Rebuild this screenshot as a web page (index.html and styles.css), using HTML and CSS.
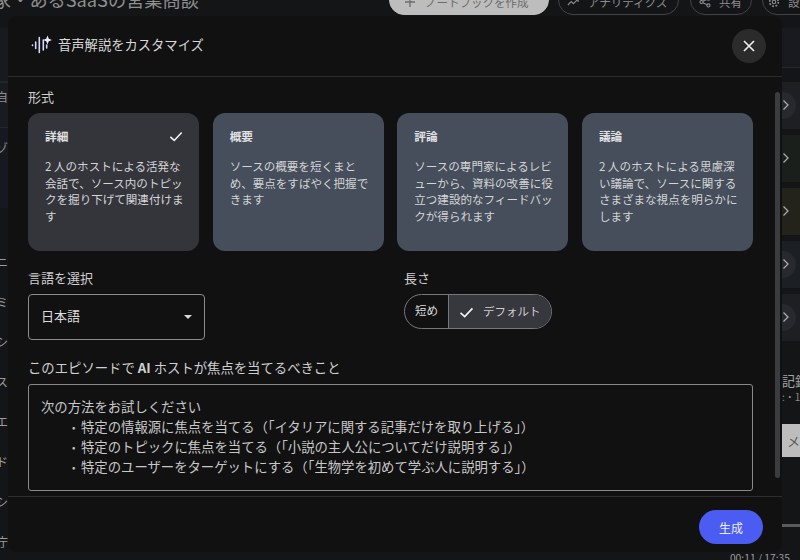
FILE: index.html
```html
<!DOCTYPE html>
<html lang="ja">
<head>
<meta charset="utf-8">
<title>音声解説をカスタマイズ</title>
<link rel="stylesheet" href="styles.css">
</head>
<body>
<div class="page">
  <header class="topbar">
    <div class="nb-title">家・あるSaaSの営業商談</div>
    <div class="top-actions">
      <span class="pill pill-light"><svg class="pill-icon" viewBox="0 0 12 12"><path d="M6 1v10M1 6h10"/></svg>ノートブックを作成</span>
      <span class="pill pill-ana"><svg class="pill-icon" viewBox="0 0 14 12"><path d="M1 9.500 5 5.500l2.500 2.500L13 2.500M9.500 2.500H13V6"/></svg>アナリティクス</span>
      <span class="pill pill-share"><svg class="pill-icon" viewBox="0 0 14 14"><circle cx="11" cy="3" r="1.800"/><circle cx="3" cy="7" r="1.800"/><circle cx="11" cy="11" r="1.800"/><path d="M4.500 6.200l5-2.400M4.500 7.800l5 2.400"/></svg>共有</span>
      <span class="pill pill-set"><svg class="pill-icon" viewBox="0 0 14 14"><circle cx="7" cy="7" r="2"/><circle class="gear" cx="7" cy="7" r="5"/></svg>設定</span>
    </div>
  </header>
  <div class="middle">
    <div class="left-strip">
      <div class="ls-head"></div>
      <div class="ls ls-band">自</div>
      <div class="ls ls-band2">ゾ.</div>
      <div class="ls ls-plain ls-first">ニ</div>
      <div class="ls ls-plain">ミ</div>
      <div class="ls ls-plain">シ</div>
      <div class="ls ls-plain">ス:</div>
      <div class="ls ls-plain">エ</div>
      <div class="ls ls-plain">ド</div>
      <div class="ls ls-plain">シ</div>
      <div class="ls ls-plain">庁:</div>
    </div>
    <div class="center"></div>
    <div class="right-strip">
      <div class="rs-head"></div>
      <div class="rs-row rs-a"><span class="rs-dot"></span><svg class="rs-chev" viewBox="0 0 8 12"><path d="M1.500 1.500 6 6l-4.500 4.500"/></svg></div>
      <div class="rs-row rs-b"><svg class="rs-chev" viewBox="0 0 8 12"><path d="M1.500 1.500 6 6l-4.500 4.500"/></svg></div>
      <div class="rs-row rs-c"><svg class="rs-chev" viewBox="0 0 8 12"><path d="M1.500 1.500 6 6l-4.500 4.500"/></svg></div>
      <div class="rs-row rs-d"><span class="rs-dot"></span><svg class="rs-chev" viewBox="0 0 8 12"><path d="M1.500 1.500 6 6l-4.500 4.500"/></svg></div>
      <div class="rs-row rs-a"><span class="rs-dot"></span><svg class="rs-chev" viewBox="0 0 8 12"><path d="M1.500 1.500 6 6l-4.500 4.500"/></svg></div>
      <div class="rs-text1">記録</div>
      <div class="rs-text2">:・16</div>
      <div class="rs-note">メ</div>
      <div class="rs-bar"></div>
    </div>
  </div>
  <footer class="footbar">00:11 / 17:35</footer>
</div>

<section class="dialog">
  <div class="dlg-head">
    <svg class="spark" viewBox="0 0 22 20" width="22" height="20">
      <path class="spark-bars" d="M2.500 10v.5M5.700 7v6.500M9.300 2.500v15M13.300 5v10M16.700 10v3"/>
      <path class="spark-star" d="M17.500 .5l1.300 3.200 3.200 1.300-3.200 1.300-1.300 3.200-1.300-3.200-3.200-1.300 3.200-1.300z"/>
    </svg>
    <h1 class="dlg-title">音声解説をカスタマイズ</h1>
    <button class="close" aria-label="閉じる">
      <svg viewBox="0 0 14 14" width="14" height="14"><path d="M2 2l10 10M12 2 2 12"/></svg>
    </button>
  </div>
  <div class="dlg-body">
    <div class="label label-first">形式</div>
    <div class="cards">
      <div class="card card-on">
        <div class="card-top"><span class="card-title">詳細</span>
          <svg class="card-check" viewBox="0 0 16 12" width="14" height="11"><path d="M1.500 6.500 6 10.500 14.500 1.500"/></svg>
        </div>
        <p class="card-text">2 人のホストによる活発な会話で、ソース内のトピックを掘り下げて関連付けます</p>
      </div>
      <div class="card">
        <div class="card-top"><span class="card-title">概要</span></div>
        <p class="card-text">ソースの概要を短くまとめ、要点をすばやく把握できます</p>
      </div>
      <div class="card">
        <div class="card-top"><span class="card-title">評論</span></div>
        <p class="card-text">ソースの専門家によるレビューから、資料の改善に役立つ建設的なフィードバックが得られます</p>
      </div>
      <div class="card">
        <div class="card-top"><span class="card-title">議論</span></div>
        <p class="card-text">2 人のホストによる思慮深い議論で、ソースに関するさまざまな視点を明らかにします</p>
      </div>
    </div>
    <div class="options">
      <div class="opt-lang">
        <div class="label">言語を選択</div>
        <div class="select"><span>日本語</span><span class="caret"></span></div>
      </div>
      <div class="opt-len">
        <div class="label">長さ</div>
        <div class="segment">
          <span class="seg seg-short">短め</span>
          <span class="seg seg-def">
            <svg class="seg-check" viewBox="0 0 16 12" width="15" height="11"><path d="M1.500 6.500 6 10.500 14.500 1.500"/></svg>
            デフォルト
          </span>
        </div>
      </div>
    </div>
    <div class="label label-focus">このエピソードで <b>AI</b> ホストが焦点を当てるべきこと</div>
    <div class="textarea">
      <div>次の方法をお試しください</div>
      <ul class="tips">
        <li>特定の情報源に焦点を当てる（「イタリアに関する記事だけを取り上げる」）</li>
        <li>特定のトピックに焦点を当てる（「小説の主人公についてだけ説明する」）</li>
        <li>特定のユーザーをターゲットにする（「生物学を初めて学ぶ人に説明する」）</li>
      </ul>
    </div>
    <div class="scroll-thumb"></div>
  </div>
  <div class="dlg-foot"><button class="gen">生成</button></div>
</section>
</body>
</html>
```

FILE: styles.css
```css
* { box-sizing: border-box; }
html, body { margin: 0; height: 100%; }
body {
  width: 800px;
  height: 560px;
  overflow: hidden;
  position: relative;
  background: #141517;
  font-family: "Noto Sans CJK JP", "Noto Sans", sans-serif;
  color: #d6d8da;
}
.page { height: 560px; display: flex; flex-direction: column; }
.topbar {
  height: 15px;
  flex: none;
  display: flex;
  align-items: flex-end;
  justify-content: space-between;
  overflow: hidden;
  background: #141517;
}
.nb-title {
  font-size: 18.200px;
  line-height: 28px;
  color: #8f8f8f;
  margin-left: -7px;
  margin-bottom: 2px;
  white-space: nowrap;
}
.top-actions { display: flex; gap: 10px; flex: none; margin-right: -40px; align-items: flex-end; }
.pill {
  height: 30px;
  flex: none;
  display: flex;
  align-items: center;
  border: 1px solid #414347;
  border-radius: 15px;
  padding-top: 4px;
  font-size: 11.500px;
  color: #8c8d8f;
  white-space: nowrap;
}
.pill-icon { flex: none; fill: none; stroke: currentColor; stroke-width: 1.300; width: 12px; height: 12px; }
.pill-light { background: #bdbdbd; border-color: #bdbdbd; color: #6c6c6c; width: 160px; padding-left: 14px; gap: 9px; margin-right: -1px; }
.pill-ana { width: 121px; padding-left: 8px; gap: 9px; margin-right: 1px; }
.pill-share { width: 62px; padding-left: 8px; gap: 8px; }
.pill-set { width: 78px; padding-left: 5px; gap: 8px; }
.gear { stroke-dasharray: 2 1.900; stroke-width: 2; }

.middle { flex: 1; display: flex; min-height: 0; }
.left-strip { width: 8px; flex: none; overflow: hidden; padding-top: 13px; background: #141518; }
.ls-head { height: 54px; background: #191a1f; border-bottom: 1px solid #24252a; }
.ls { font-size: 12px; width: 8px; overflow: hidden; white-space: nowrap; color: #8f9092; text-align: right; direction: rtl; }
.ls-band { height: 46px; padding-top: 5px; line-height: 18px; background: #1a1b21; border-top: 1px solid #25262b; border-bottom: 1px solid #25262b; }
.ls-band2 { height: 80px; padding-top: 11px; line-height: 18px; background: #181920; }
.ls-plain { height: 40px; line-height: 18px; color: #9c9c9c; }
.ls-first { margin-top: 45px; }
.center { flex: 1; }
.right-strip { width: 18px; flex: none; overflow: hidden; background: #141517; }
.rs-head { height: 40px; margin-top: 13px; margin-bottom: 14px; background: #191a1f; border-bottom: 1px solid #26272b; }
.rs-row {
  position: relative;
  height: 47px;
  margin-bottom: 6px;
  overflow: hidden;
}
.rs-a { background: #1e1f23; }
.rs-b { background: #1b1f1c; }
.rs-c { background: #23231b; }
.rs-d { background: #1c2024; }
.rs-dot { position: absolute; left: -13px; top: 10px; width: 27px; height: 27px; border-radius: 50%; background: #28292e; }
.rs-chev { position: absolute; left: 0; top: 17px; width: 8px; height: 12px; }
.rs-chev path { fill: none; stroke: #a8a9ab; stroke-width: 1.300; }
.rs-text1 { margin-top: 31px; font-size: 13px; line-height: 18px; color: #a5a5a5; white-space: nowrap; }
.rs-text2 { font-size: 10px; line-height: 14px; color: #8a8a8a; white-space: nowrap; }
.rs-note { margin-top: 20px; height: 33px; background: #bdbdbd; color: #555; font-size: 13px; line-height: 33px; padding-left: 5px; }
.rs-bar { margin-top: 67px; height: 3px; background: #5b5b5b; }
.footbar {
  height: 10px;
  flex: none;
  font-size: 10.300px;
  line-height: 15px;
  text-align: right;
  color: #9c9c9c;
  padding-right: 10px;
  white-space: nowrap;
  overflow: hidden;
  background: #141517;
}

.dialog {
  position: absolute;
  left: 8px;
  top: 16px;
  width: 774px;
  height: 536px;
  background: #111112;
  border-radius: 8px;
  display: flex;
  flex-direction: column;
}
.dlg-head {
  height: 61px;
  flex: none;
  display: flex;
  align-items: center;
  padding: 0 16px 0 22px;
  border-bottom: 1px solid #2c2c2e;
  gap: 6px;
}
.spark { flex: none; margin-top: -2px; }
.spark-bars { fill: none; stroke: #d4d8f8; stroke-width: 1.600; stroke-linecap: round; }
.spark-star { fill: #eceefd; }
.dlg-title { margin: -3px 0 0; font-size: 13.300px; font-weight: 400; line-height: 20px; color: #d8d8d8; flex: 1; }
.close {
  width: 34px;
  height: 34px;
  padding: 0;
  border: 0;
  border-radius: 50%;
  background: #2b2b2c;
  display: flex;
  align-items: center;
  justify-content: center;
  margin-top: -1px;
}
.close path { fill: none; stroke: #ececec; stroke-width: 1.700; }
.dlg-body { position: relative; height: 420px; flex: none; padding: 0 29px 0 20px; border-bottom: 1px solid #2e2e30; }
.label { font-size: 13px; line-height: 18px; color: #cfcfcf; }
.label b { font-weight: 700; }
.label-first { margin-top: 11px; margin-bottom: 7px; }
.cards { display: flex; gap: 13.500px; }
.card {
  flex: 1;
  height: 138px;
  border-radius: 12px;
  background: #454e5a;
  padding: 14px 14px 0 17px;
  min-width: 0;
}
.card-on { background: #34343b; }
.card-top { height: 18px; display: flex; justify-content: space-between; align-items: center; }
.card-title { font-size: 11.700px; font-weight: 700; line-height: 18px; color: #e1e1e3; }
.card-check { margin-right: 2px; }
.card-check path, .seg-check path { fill: none; stroke: #f4f4f4; stroke-width: 1.800; }
.card-text { margin: 13px 0 0; font-size: 11.550px; line-height: 16.700px; color: #d3d5d8; }
.options { display: flex; margin-top: 18px; }
.opt-lang { width: 376px; flex: none; }
.select {
  width: 177px;
  height: 46px;
  margin-top: 7px;
  border: 1px solid #8c8c8c;
  border-radius: 4px;
  display: flex;
  align-items: center;
  justify-content: space-between;
  padding: 0 12px;
  font-size: 13px;
  color: #dcdcdc;
}
.select span:first-child { margin-top: -4px; }
.caret { width: 0; height: 0; border-left: 4.500px solid transparent; border-right: 4.500px solid transparent; border-top: 4.500px solid #d8d8d8; }
.segment {
  width: 148px;
  height: 35px;
  margin-top: 7px;
  display: flex;
  border: 1px solid #77787c;
  border-radius: 18px;
  overflow: hidden;
  font-size: 11.500px;
  line-height: 31px;
}
.seg { display: block; white-space: nowrap; }
.seg-short { width: 44px; flex: none; text-align: center; border-right: 1px solid #77787c; color: #dddddd; }
.seg-def { flex: 1; background: #37373e; padding-left: 10px; color: #cfcfd1; display: flex; gap: 9px; align-items: center; }
.seg-check { margin-top: 2px; }
.label-focus { margin-top: 19px; font-size: 13.350px; }
.textarea {
  height: 107px;
  margin-top: 7px;
  border: 1px solid #8a8a8a;
  border-radius: 3px;
  padding: 12px 12px 0;
  font-size: 13.350px;
  line-height: 20px;
  color: #c8c8c8;
}
.tips { margin: 0; padding: 0 0 0 40px; list-style: none; }
.tips li::before { content: "•"; display: inline-block; width: 9px; font-size: 10px; margin-left: -9px; vertical-align: 1px; }
.scroll-thumb {
  position: absolute;
  right: 2px;
  top: 15px;
  width: 5px;
  height: 386px;
  border-radius: 3px;
  background: #3b3c3e;
}
.dlg-foot { flex: 1; display: flex; justify-content: flex-end; align-items: flex-start; padding: 13px 19px 0 0; }
.gen {
  width: 64px;
  height: 34px;
  border: 0;
  border-radius: 17px;
  background: #4a5cf2;
  color: #eceefe;
  font-family: inherit;
  font-size: 12px;
  padding: 0;
}
```
